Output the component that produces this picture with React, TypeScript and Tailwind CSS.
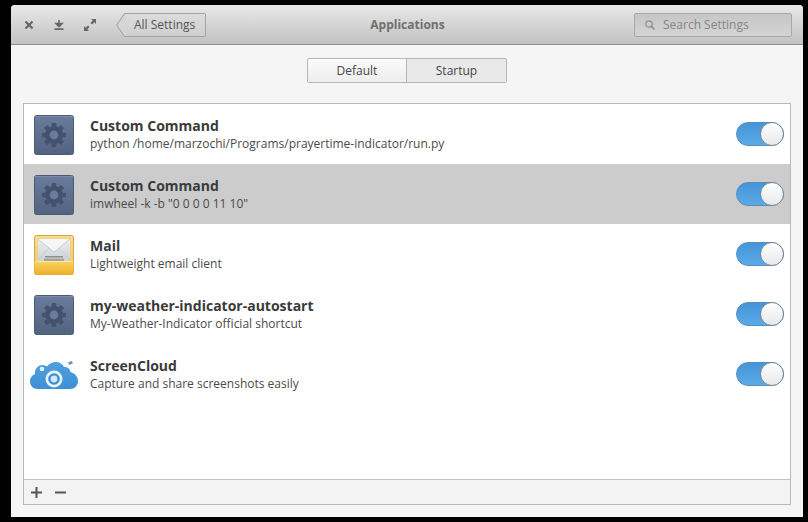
import React from "react";

const Gear = () => (
  <svg width="40" height="40" viewBox="0 0 40 40" className="shrink-0">
    <defs>
      <linearGradient id="tile" x1="0" y1="0" x2="0" y2="1">
        <stop offset="0" stopColor="#6a7c9d" />
        <stop offset="1" stopColor="#52637f" />
      </linearGradient>
    </defs>
    <rect x="0.5" y="0.5" width="39" height="39" rx="2" fill="url(#tile)" stroke="#4c5a74" />
    <rect x="1" y="1" width="38" height="1" fill="#8a9ab6" opacity="0.6" />
    <g fill="#44526e">
      <circle cx="20" cy="20" r="9" />
      {[0, 45, 90, 135, 180, 225, 270, 315].map((a) => (
        <rect key={a} x="17.7" y="8" width="4.6" height="6" rx="0.8" transform={`rotate(${a} 20 20)`} />
      ))}
    </g>
    <circle cx="20" cy="20" r="4.4" fill="#6a7c9d" />
  </svg>
);

const MailIcon = () => (
  <svg width="40" height="40" viewBox="0 0 40 40" className="shrink-0">
    <defs>
      <linearGradient id="mailTop" x1="0" y1="0" x2="0" y2="1">
        <stop offset="0" stopColor="#f8dc8c" />
        <stop offset="1" stopColor="#f0c658" />
      </linearGradient>
      <linearGradient id="mailBot" x1="0" y1="0" x2="0" y2="1">
        <stop offset="0" stopColor="#fbd25c" />
        <stop offset="1" stopColor="#eeb02c" />
      </linearGradient>
      <linearGradient id="env" x1="0" y1="0" x2="0" y2="1">
        <stop offset="0" stopColor="#eceded" />
        <stop offset="1" stopColor="#cfd3d6" />
      </linearGradient>
    </defs>
    <rect x="0.5" y="0.5" width="39" height="39" rx="2" fill="url(#mailTop)" stroke="#d9a63a" />
    <rect x="3.5" y="3.5" width="33" height="23" fill="#d9cfa8" />
    <rect x="4" y="4" width="32" height="22" fill="url(#env)" />
    <path d="M4 4 L20 17 L36 4" fill="#f6f6f6" stroke="#bfc3c6" strokeWidth="0.8" />
    <path d="M4 25 L15 13 M36 25 L25 13" stroke="#c2c6c9" strokeWidth="0.8" fill="none" />
    <rect x="11" y="21" width="18" height="1.5" fill="#8d8f8e" />
    <rect x="10" y="23.5" width="20" height="2.5" fill="#a5a59d" />
    <path d="M0.5 26.5 H39.5 V38 a1.5 1.5 0 0 1 -1.5 1.5 H2 a1.5 1.5 0 0 1 -1.5 -1.5 Z" fill="url(#mailBot)" />
    <rect x="1" y="26" width="38" height="1" fill="#fdeaa8" />
  </svg>
);

const CloudIcon = () => (
  <svg width="48" height="30" viewBox="0 0 48 30" className="shrink-0">
    <defs>
      <linearGradient id="cloud" x1="0" y1="0" x2="0" y2="1">
        <stop offset="0" stopColor="#4f9fe2" />
        <stop offset="1" stopColor="#3f8fd6" />
      </linearGradient>
    </defs>
    <path
      d="M8 29 C3 29 0 25.500 0 21.500 C0 17.500 2.500 15 5 14 C4.500 9 8 5 12.500 5 C14.500 5 16 5.800 17 6.500 C19 3.500 22.500 2 26 2 C30 2 32.500 4 34 7 C37 6.500 40 8.500 40.500 12 C44.500 13 48 16.500 48 21 C48 25.500 44.500 29 40 29 Z"
      fill="url(#cloud)"
    />
    <circle cx="12" cy="9" r="2.300" fill="#e9f3fb" />
    <circle cx="24" cy="19" r="8.500" fill="#e9f3fb" />
    <circle cx="24" cy="19" r="5.800" fill="#3c8bd2" />
    <circle cx="24" cy="19" r="3.400" fill="#d4e8f7" />
    <path d="M38 2.500 l3.500 -1.500 l1.500 2 l-3.500 2 Z" fill="#6b8fae" />
  </svg>
);

const Toggle = () => (
  <div className="relative h-6 w-12 shrink-0 rounded-full border border-[#5a8db8] bg-gradient-to-b from-[#4596da] to-[#5aaae8]">
    <div className="absolute right-[-1px] top-[-1px] h-6 w-6 rounded-full border border-[#7a8a98] bg-gradient-to-b from-[#ffffff] to-[#e6e8ea]" />
  </div>
);

const rows: { icon: React.ReactNode; title: string; sub: string; sel?: boolean }[] = [
  { icon: <Gear />, title: "Custom Command", sub: "python /home/marzochi/Programs/prayertime-indicator/run.py" },
  { icon: <Gear />, title: "Custom Command", sub: 'imwheel -k -b "0 0 0 0 11 10"', sel: true },
  { icon: <MailIcon />, title: "Mail", sub: "Lightweight email client" },
  { icon: <Gear />, title: "my-weather-indicator-autostart", sub: "My-Weather-Indicator official shortcut" },
  { icon: <CloudIcon />, title: "ScreenCloud", sub: "Capture and share screenshots easily" },
];

export default function App() {
  return (
    <div className="h-[522px] w-[808px] overflow-hidden bg-black pl-[11px] pt-[5px] font-['Open_Sans',sans-serif]">
      <div className="flex h-[512px] w-[792px] flex-col rounded-t-[4px] bg-[#f5f5f5]">
        <header className="grid h-[40px] shrink-0 grid-cols-[1fr_auto_1fr] items-center rounded-t-[4px] border-b border-[#8f8f8f] bg-gradient-to-b from-[#e8e8e8] to-[#c2c2c2] pl-[12px] pr-[11px]">
          <div className="flex items-center">
            <svg width="12" height="12" viewBox="0 0 12 12" className="mr-[18px]">
              <path d="M2.5 2.5 L9.5 9.5 M9.5 2.5 L2.5 9.5" stroke="#666666" strokeWidth="2.2" />
            </svg>
            <svg width="12" height="12" viewBox="0 0 12 12" className="mr-[18px]">
              <path d="M6 1 V6 M3 4.5 L6 7.5 L9 4.5 Z" stroke="#666666" strokeWidth="1.6" fill="#666666" />
              <rect x="1.5" y="9.3" width="9" height="1.7" fill="#666666" />
            </svg>
            <svg width="14" height="14" viewBox="0 0 14 14" className="mr-[19px]">
              <path d="M8 1 H13 V6 L11.3 4.3 L9 6.6 L7.4 5 L9.7 2.7 Z M6 13 H1 V8 L2.7 9.7 L5 7.4 L6.6 9 L4.3 11.300 Z" fill="#666666" />
            </svg>
            <div className="flex h-[24px] items-stretch">
              <svg width="10" height="24" viewBox="0 0 10 24" className="shrink-0">
                <path d="M10 0.500 H8.500 L0.700 12 L8.500 23.500 H10" fill="#d6d6d6" stroke="#9a9a9a" />
              </svg>
              <div className="flex w-[80px] items-center rounded-r-[2px] border border-l-0 border-[#a3a3a3] bg-gradient-to-b from-[#dcdcdc] to-[#cfcfcf] pl-[8px] text-[12px] text-[#555555]">
                All Settings
              </div>
            </div>
          </div>
          <div className="text-[12px] font-bold text-[#6f6f6f]">Applications</div>
          <div className="flex justify-end">
            <div className="flex h-[24px] w-[158px] items-center rounded-[2px] border border-[#a8a8a8] bg-gradient-to-b from-[#c6c6c6] to-[#d4d4d4] pl-[9px] text-[12px] text-[#858585]">
              <svg width="12" height="12" viewBox="0 0 12 12" className="mr-[7px]">
                <circle cx="5" cy="5" r="3.2" stroke="#8f8f8f" strokeWidth="1.2" fill="none" />
                <path d="M7.500 7.500 L10.500 10.500" stroke="#8f8f8f" strokeWidth="1.6" />
              </svg>
              Search Settings
            </div>
          </div>
        </header>

        <div className="flex justify-center pt-[13px]">
          <div className="flex h-[25px] w-[200px] rounded-[2px] border border-[#b5b5b5] text-[12px] text-[#444444]">
            <div className="flex w-[99px] items-center justify-center rounded-l-[2px] border-r border-[#b5b5b5] bg-gradient-to-b from-[#fafafa] to-[#eeeeee]">
              Default
            </div>
            <div className="flex flex-1 items-center justify-center rounded-r-[2px] bg-[#e9e9e9]">Startup</div>
          </div>
        </div>

        <div className="mx-[12px] mt-[20px] flex h-[402px] flex-col border border-[#b8b8b8] bg-white">
          <div className="flex-1">
            {rows.map((r, i) => (
              <div key={i} className={`flex h-[60px] items-center pr-[6px] ${r.sel ? "bg-[#cccccc]" : ""}`}>
                <div className="mr-[6px] mt-[2px] flex w-[60px] shrink-0 justify-center">{r.icon}</div>
                <div className="min-w-0 flex-1 text-[#3a3a3a]">
                  <div className="text-[14px] font-bold leading-[18px]">{r.title}</div>
                  <div className="text-[12px] leading-[17px] text-[#4a4a4a]">{r.sub}</div>
                </div>
                <Toggle />
              </div>
            ))}
          </div>
          <div className="flex h-[25px] items-center gap-[11px] border-t border-[#c4c4c4] bg-[#f3f3f3] pl-[6px]">
            <svg width="13" height="13" viewBox="0 0 13 13">
              <path d="M6.500 1 V12 M1 6.500 H12" stroke="#555555" strokeWidth="2" />
            </svg>
            <svg width="13" height="13" viewBox="0 0 13 13">
              <path d="M1 6.500 H12" stroke="#555555" strokeWidth="2" />
            </svg>
          </div>
        </div>
      </div>
    </div>
  );
}
